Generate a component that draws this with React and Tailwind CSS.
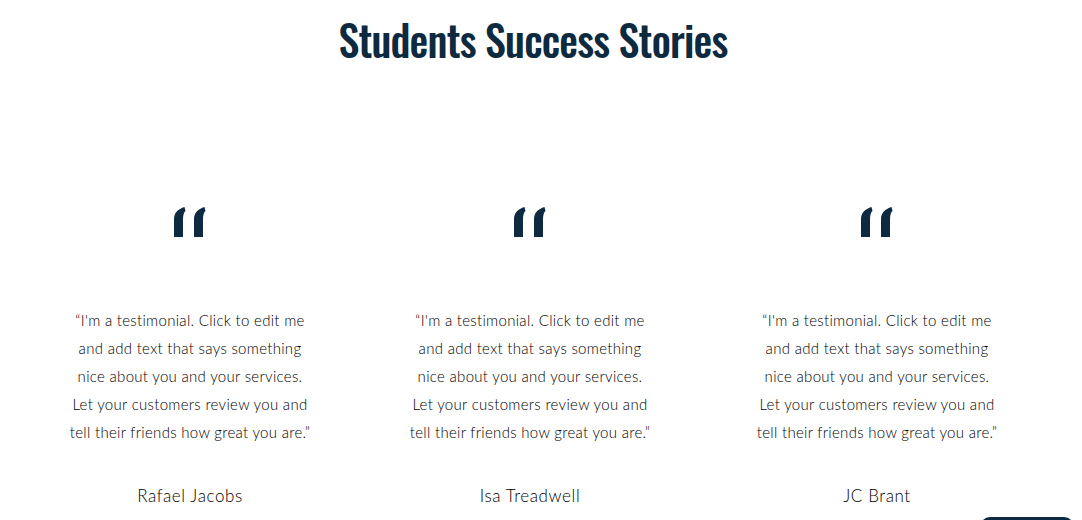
import React from "react";

const stories = [
  { name: "Rafael Jacobs" },
  { name: "Isa Treadwell" },
  { name: "JC Brant" },
];

const QuoteMark = () => (
  <svg width="32" height="30" viewBox="0 0 32 30" fill="#0d2a40">
    <path d="M0 30 L0 12 C0 6 4 2 10.5 0 L11.5 4 C10 5 9 8 9 12.5 L9 30 Z" />
    <path d="M20 30 L20 12 C20 6 24 2 30.5 0 L31.5 4 C30 5 29 8 29 12.5 L29 30 Z" />
  </svg>
);

const App = () => {
  return (
    <div className="relative w-[1082px] h-[520px] bg-white overflow-hidden">
      {/* Title */}
      <h1
        className="pt-[12px] pr-[16px] text-center text-[42px] leading-[54px] font-medium tracking-[-0.8px] text-[#0d2a40]"
        style={{ fontFamily: '"Oswald", "Liberation Sans Narrow", "DejaVu Sans Condensed", sans-serif' }}
      >
        Students Success Stories
      </h1>

      {/* Testimonials */}
      <div className="flex pl-[20px] mt-[141px]">
        {stories.map((s, i) => (
          <div
            key={s.name}
            className={`w-[340px] flex flex-col items-center ${i === 2 ? "ml-[7px]" : ""}`}
          >
            <QuoteMark />
            <p
              className="mt-[69px] text-center text-[15px] leading-[28px] tracking-[0.3px] text-black font-light"
              style={{ fontFamily: 'Lato, "Open Sans", sans-serif' }}
            >
              “I'm a testimonial. Click to edit me
              <br />
              and add text that says something
              <br />
              nice about you and your services.
              <br />
              Let your customers review you and
              <br />
              tell their friends how great you are.”
            </p>
            <p
              className="mt-[38px] text-[17px] leading-[24px] tracking-[0.6px] text-black font-light"
              style={{ fontFamily: 'Lato, "Open Sans", sans-serif' }}
            >
              {s.name}
            </p>
          </div>
        ))}
      </div>

      {/* Chat widget edge */}
      <div className="absolute right-[8px] bottom-[-20px] w-[94px] h-[23px] rounded-t-[10px] bg-[#0d2a40]" />
    </div>
  );
};

export default App;
